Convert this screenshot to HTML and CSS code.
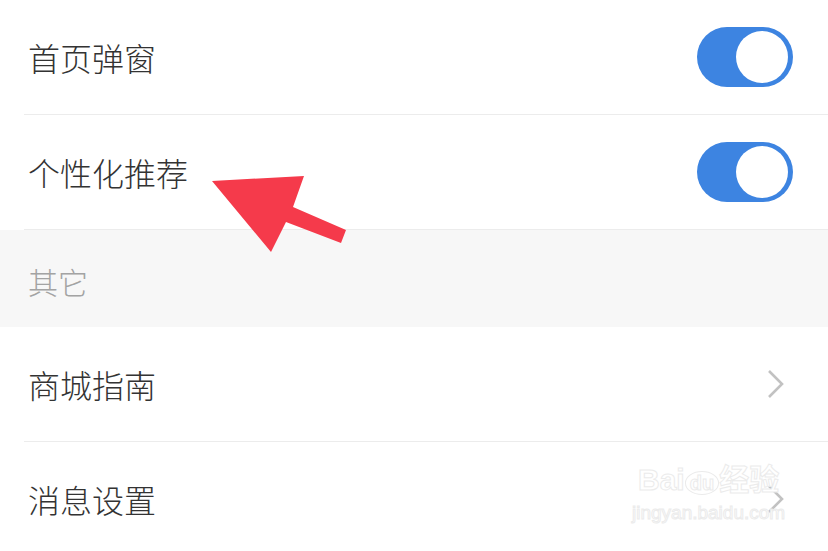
FILE: index.html
```html
<!DOCTYPE html>
<html lang="zh-CN">
<head>
    <meta charset="UTF-8">
    <meta name="viewport" content="width=device-width, initial-scale=1.0">
    <title>设置</title>
    <link rel="stylesheet" href="styles.css">
</head>
<body>
    <div class="settings">
        <div class="item">
            <span class="label">首页弹窗</span>
            <span class="switch on"><span class="knob"></span></span>
        </div>
        <div class="item">
            <span class="label">个性化推荐</span>
            <span class="switch on"><span class="knob"></span></span>
        </div>
        <div class="section">其它</div>
        <div class="item">
            <span class="label">商城指南</span>
            <svg class="chevron" viewBox="0 0 18 30"><path d="M2 2 L15 15 L2 28" /></svg>
        </div>
        <div class="item last">
            <span class="label">消息设置</span>
            <svg class="chevron" viewBox="0 0 18 30"><path d="M2 2 L15 15 L2 28" /></svg>
        </div>

        <!-- annotation arrow -->
        <svg class="arrow" viewBox="0 0 828 551">
            <polygon points="212,181 304,176 293,207 346,230 341,243 286,222 271,252" />
        </svg>

        <div class="watermark">
            <div class="wm-top">Bai<span class="wm-du">du</span>经验</div>
            <div class="wm-url">jingyan.baidu.com</div>
        </div>
    </div>
</body>
</html>
```

FILE: styles.css
```css
body {
    margin: 0;
    background-color: #fff;
    font-family: "Noto Sans CJK SC", "Noto Sans", sans-serif;
    color: #333;
}
.settings {
    position: relative;
    width: 828px;
    height: 551px;
    overflow: hidden;
}
.item {
    height: 114px;
    margin-left: 24px;
    padding-left: 4px;
    padding-right: 35px;
    border-bottom: 1px solid #ececec;
    display: flex;
    align-items: center;
    justify-content: space-between;
}
.item.last {
    border-bottom: none;
}
.label {
    font-size: 32px;
    font-weight: 300;
    line-height: 1;
    color: #333;
}
.section {
    height: 97px;
    background-color: #f7f7f7;
    padding-left: 28px;
    padding-top: 4px;
    box-sizing: border-box;
    display: flex;
    align-items: center;
    font-size: 30px;
    font-weight: 300;
    color: #a3a3a3;
}
.switch {
    width: 96px;
    height: 60px;
    border-radius: 30px;
    background-color: #3d84e1;
    display: flex;
    align-items: center;
    justify-content: flex-end;
    padding-right: 5px;
    box-sizing: border-box;
}
.knob {
    width: 52px;
    height: 52px;
    border-radius: 50%;
    background-color: #fff;
}
.chevron {
    width: 18px;
    height: 30px;
    margin-right: 8px;
    fill: none;
    stroke: #c2c2c2;
    stroke-width: 2.6;
}
.arrow {
    position: absolute;
    left: 0;
    top: 0;
    width: 828px;
    height: 551px;
    fill: #f53a4b;
}
.watermark {
    position: absolute;
    left: 632px;
    top: 462px;
    color: #fff;
    -webkit-text-stroke: 1px #ebebeb;
    font-family: "Liberation Sans", "Noto Sans CJK SC", sans-serif;
    text-align: center;
}
.wm-top {
    font-size: 30px;
    font-weight: bold;
    line-height: 36px;
}
.wm-du {
    font-size: 20px;
    border: 1px solid #ebebeb;
    border-radius: 50%;
    padding: 0 4px;
}
.wm-url {
    font-size: 19px;
    line-height: 24px;
}
```
